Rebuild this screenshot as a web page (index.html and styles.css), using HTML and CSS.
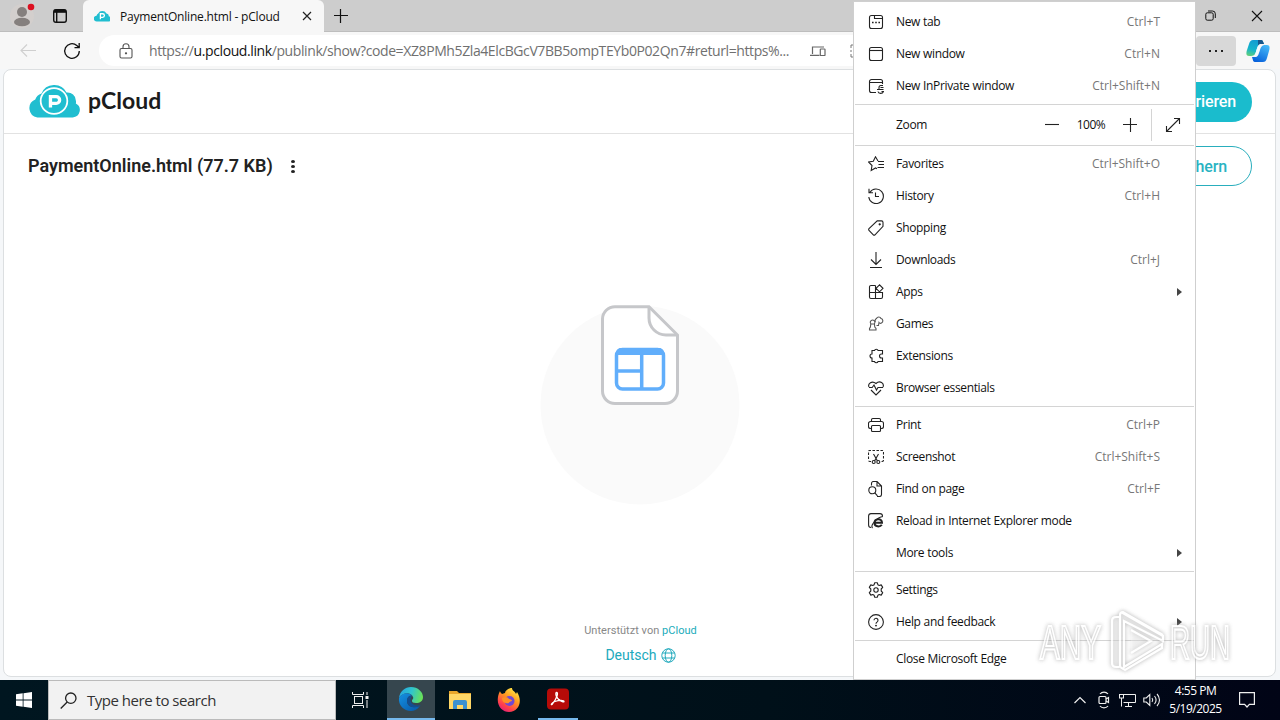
FILE: index.html
```
<!DOCTYPE html>
<html lang="en">
<head>
    <meta charset="UTF-8">
    <meta name="viewport" content="width=device-width, initial-scale=1.0">
    <title>PaymentOnline.html - pCloud</title>
    <link rel="stylesheet" href="styles.css">
</head>
<body>

<div class="desktop">
    <div class="browser">

        <!-- Title bar -->
        <div class="titlebar">
            <div class="profile">
                <svg width="26" height="26" viewBox="0 0 26 26"><circle cx="13" cy="13" r="12" fill="#d3cfcd"/><circle cx="13" cy="9" r="5" fill="#85807e"/><ellipse cx="13" cy="19" rx="8" ry="4.3" fill="#85807e"/><circle cx="22" cy="4" r="3.3" fill="#dc1020"/></svg>
            </div>
            <div class="workspaces">
                <svg width="16" height="16" viewBox="0 0 16 16" fill="none" stroke="#111" stroke-width="1.4"><rect x="1.7" y="1.7" width="12.6" height="12.6" rx="2.2"/><path d="M2 3.3h12" stroke-width="3"/><path d="M4.7 4v10"/></svg>
            </div>
            <div class="tab">
                <svg class="tab-icon" width="16" height="12" viewBox="0 0 50 34"><path d="M9 34a9 9 0 0 1-1-18A9 9 0 0 1 13 9a15 15 0 0 1 26 0 8 8 0 0 1 7 9 8 8 0 0 1-3 16z" fill="#20bed0"/><path d="M20 27V10h7a5 5 0 0 1 0 11h-7" fill="none" stroke="#fff" stroke-width="4"/></svg>
                <span class="tab-title">PaymentOnline.html - pCloud</span>
                <svg class="tab-close" width="10" height="10" viewBox="0 0 10 10" stroke="#222" stroke-width="1.2"><path d="M1 1l8 8M9 1l-8 8"/></svg>
            </div>
            <svg class="new-tab" width="14" height="14" viewBox="0 0 14 14" stroke="#111" stroke-width="1.2"><path d="M0 6.500h14M6.500 0v14"/></svg>
            <div class="window-buttons">
                <svg width="11" height="11" viewBox="0 0 11 11" fill="none" stroke="#111"><rect x=".8" y="2.8" width="7.4" height="7.4" rx="1.5"/><path d="M3 1h4.500a2.800 2.800 0 0 1 2.800 2.800V8"/></svg>
                <svg width="12" height="12" viewBox="0 0 12 12" stroke="#111" stroke-width="1.1"><path d="M1 1l10 10M11 1L1 11"/></svg>
            </div>
        </div>

        <!-- Toolbar -->
        <div class="toolbar">
            <svg class="back" width="16" height="14" viewBox="0 0 16 14" fill="none" stroke="#cfcfcf" stroke-width="1.1"><path d="M16 6.500H1M7 .500l-6 6 6 6"/></svg>
            <svg class="reload" width="18" height="18" viewBox="0 0 18 18" fill="none" stroke="#111" stroke-width="1.3"><path d="M16.300 9A7.300 7.300 0 1 1 13.800 3.500L16 5.500M16.200 1v4.700h-4.700"/></svg>
            <div class="address">
                <svg width="14" height="16" viewBox="0 0 14 16" fill="none" stroke="#555" stroke-width="1.1"><rect x="1" y="5.500" width="12" height="9.500" rx="1.500"/><path d="M4 5.500V3.700a3 3 0 0 1 6 0v1.800"/><circle cx="7" cy="10.300" r=".6" fill="#555"/></svg>
                <span class="url">https://<b>u.pcloud.link</b>/publink/show?code=XZ8PMh5Zla4ElcBGcV7BB5ompTEYb0P02Qn7#returl=https%...</span>
                <svg class="devices" width="16" height="12" viewBox="0 0 16 12" fill="none" stroke="#666" stroke-width="1.200"><path d="M14 2H2.500v7M0 10.300h9.500"/><rect x="10.300" y="4" width="4.700" height="6.500" rx=".6"/></svg>
                <svg class="focus" width="14" height="14" viewBox="0 0 14 14" fill="none" stroke="#777"><path d="M4 1H1v3M1 10v3h3M1 6v2"/></svg>
            </div>
            <div class="more"><i></i><i></i><i></i></div>
            <svg class="copilot" width="24" height="22" viewBox="0 0 24 22">
                <defs>
                    <linearGradient id="cop1" x1="0.500" y1="0" x2="0.200" y2="1"><stop offset="0" stop-color="#129bd2"/><stop offset=".6" stop-color="#16b5cb"/><stop offset="1" stop-color="#62cf7b"/></linearGradient>
                    <linearGradient id="cop2" x1="0.800" y1="0" x2="0.300" y2="1"><stop offset="0" stop-color="#45baf8"/><stop offset="1" stop-color="#0861db"/></linearGradient>
                </defs>
                <path d="M7 0h8c2 0 2 2 3 4h-4c-2 0-3 4-4 8-1 3-3 4-5 4H3c-3 0-3-3-2-6l2-6c1-3 2-4 4-4z" fill="url(#cop1)"/>
                <path d="M12 0h3c2 0 2 2 3 4h-4c-1 0-2 1-2 2z" fill="#17578b"/>
                <path d="M17 22H9c-2 0-2-2-3-5h4c2 0 3-4 4-7 1-4 3-5 5-5h2c3 0 3 3 2 6l-2 7c-1 3-2 4-4 4z" fill="url(#cop2)"/>
                <path d="M14 6c-2 1-2 5-4 9" fill="none" stroke="#f4fbff" stroke-width="2.500"/>
            </svg>
        </div>

        <!-- Web page -->
        <div class="page">
            <header class="page-header">
                <svg class="logo" width="52" height="34" viewBox="0 0 50 34" preserveAspectRatio="none"><path d="M9 33.500a9.500 9.500 0 0 1-2-18 9 9 0 0 1 6-6 13 13 0 0 1 24-1 8 8 0 0 1 9 8 7 7 0 0 1 0 3 7.500 7.500 0 0 1-3 14z" fill="#20bed0"/><circle cx="25" cy="17" r="12.800" fill="none" stroke="#fff" stroke-width="1.700"/><path d="M21.600 23.500V12.700h5.500a3.200 3.200 0 0 1 0 6.600h-5.500" fill="none" stroke="#fff" stroke-width="3.200"/></svg>
                <span class="brand">pCloud</span>
                <div class="btn btn-fill">Registrieren</div>
            </header>
            <div class="file-bar">
                <h1>PaymentOnline.html (77.7 KB)</h1>
                <div class="dots"><i></i><i></i><i></i></div>
                <div class="btn btn-line">Speichern</div>
            </div>
            <div class="preview">
                <svg width="200" height="200" viewBox="0 0 200 200">
                    <circle cx="100" cy="100" r="99.500" fill="#fafafa"/>
                    <path d="M109 1.700H75A12.500 12.500 0 0 0 62.500 14v72A12.500 12.500 0 0 0 75 98.500h50A12.500 12.500 0 0 0 137.500 86V30z" fill="#fff" stroke="#c6c7ca" stroke-width="3"/>
                    <path d="M109 2v11a17 17 0 0 0 17 17h11" fill="none" stroke="#c6c7ca" stroke-width="3"/>
                    <rect x="76.500" y="44.500" width="47" height="39.500" rx="6" fill="#fff" stroke="#61aefb" stroke-width="3.500"/>
                    <path d="M76 50V48a5 5 0 0 1 5-5h38a5 5 0 0 1 5 5v2z" fill="#61aefb"/>
                    <path d="M101.700 49v34M77 66h25" stroke="#61aefb" stroke-width="3.500"/>
                </svg>
            </div>
            <footer class="page-footer">
                <div class="powered">Unterstützt von <a>pCloud</a></div>
                <div class="language">Deutsch
                    <svg width="15" height="15" viewBox="0 0 15 15" fill="none" stroke="#20a9bc"><circle cx="7.500" cy="7.500" r="6.700"/><ellipse cx="7.500" cy="7.500" rx="3.300" ry="6.700"/><path d="M1.500 5h12M1.500 10h12"/></svg>
                </div>
            </footer>
        </div>
    </div>

    <!-- Edge menu -->
    <div class="menu">
        <div class="item">
            <svg viewBox="0 0 16 16"><rect x="1.500" y="1.500" width="13" height="13" rx="2"/><path d="M6.500 1.500v3h8"/><path d="M4 8.500h1.600M7.200 8.500h1.600M10.400 8.500H12" stroke-width="1.600"/></svg>
            <span>New tab</span><kbd>Ctrl+T</kbd>
        </div>
        <div class="item">
            <svg viewBox="0 0 16 16"><rect x="1.500" y="1.500" width="13" height="13" rx="2"/><path d="M1.500 4.500h13"/></svg>
            <span>New window</span><kbd>Ctrl+N</kbd>
        </div>
        <div class="item">
            <svg viewBox="0 0 16 16"><path d="M14.500 6V3.500a2 2 0 0 0-2-2h-9a2 2 0 0 0-2 2v9a2 2 0 0 0 2 2H8M1.500 4.500h13M15 7.500h-2a2 2 0 0 0-2 2v1.500M9 11.500h6.500M10 13.500c.5 2.500 4.500 2.500 5.500 0h-2M12.500 9.500h3"/></svg>
            <span>New InPrivate window</span><kbd>Ctrl+Shift+N</kbd>
        </div>
        <hr>
        <div class="item zoom">
            <span>Zoom</span>
            <svg class="zoom-out" viewBox="0 0 14 14"><path d="M0 6.500h14"/></svg>
            <span class="zoom-value">100%</span>
            <svg class="zoom-in" viewBox="0 0 14 14"><path d="M0 6.500h14M7.500 0v14"/></svg>
            <div class="fullscreen">
                <svg viewBox="0 0 16 16"><path d="M1.500 14.500l13-13M9 1.500h5.500V7M1.500 9v5.500H7"/></svg>
            </div>
        </div>
        <hr>
        <div class="item">
            <svg viewBox="0 0 16 16"><path d="M10 5L7.500.8 5.300 5.200.5 6l3.500 3.500-.8 5L7.500 12l1.500.8M10 5.500h6M10.500 8.500H16M9.500 11.500H16"/></svg>
            <span>Favorites</span><kbd>Ctrl+Shift+O</kbd>
        </div>
        <div class="item">
            <svg viewBox="0 0 16 16"><path d="M.8 9A7.300 7.300 0 1 0 2 4.200M1 .8v4h4M7.500 4.500v4H11"/></svg>
            <span>History</span><kbd>Ctrl+H</kbd>
        </div>
        <div class="item">
            <svg viewBox="0 0 16 16"><path d="M9.200.9h4.300A1.500 1.500 0 0 1 15 2.400v4L7 14.800a1.200 1.200 0 0 1-1.700 0L1 10.300a1.200 1.200 0 0 1 0-1.700z"/><circle cx="11.700" cy="4.300" r=".6" fill="#222"/></svg>
            <span>Shopping</span>
        </div>
        <div class="item">
            <svg viewBox="0 0 16 16"><path d="M8 0v12M3 7.500l5 5 5-5M2 15.500h12"/></svg>
            <span>Downloads</span><kbd>Ctrl+J</kbd>
        </div>
        <div class="item">
            <svg viewBox="0 0 16 16"><path d="M7.500 1.500H3A1.500 1.500 0 0 0 1.500 3v10A1.500 1.500 0 0 0 3 14.500h10a1.500 1.500 0 0 0 1.500-1.500V8.500h-13M7.500 1.500v13M11.500.8L8 4.300l3.500 3.500L15 4.300z"/></svg>
            <span>Apps</span><b class="arrow"></b>
        </div>
        <div class="item">
            <svg class="gray" viewBox="0 0 16 16"><path d="M2.800 7.800a2.300 2.300 0 1 1 3.600 0l.4 3.200 1.200 1.500v1.500H1.500v-1.500L2.400 11zM2.500 8h4M7.500 6a2.400 2.400 0 0 1 1-3.500 2.400 2.400 0 0 1 4.500 0 2.400 2.400 0 0 1 .5 4.500c-1 .6-2 .2-2.500-.5l-.5 3H8.500"/></svg>
            <span>Games</span>
        </div>
        <div class="item">
            <svg viewBox="0 0 16 16"><path d="M4 2.500h2.500a1.900 1.900 0 0 1 3.600 0H14.500V6h-1a2 2 0 0 0 0 4h1v3.500h-4.400a1.900 1.900 0 0 1-3.600 0H4V10a2 2 0 0 1 0-4z"/></svg>
            <span>Extensions</span>
        </div>
        <div class="item">
            <svg viewBox="0 0 16 16"><path d="M1 7C-.5 3.500 4 .200 8 3.500 12-.200 16.500 3.500 15 7M1 7.500h3.200L6 5l2.500 5L10 7.500h5M3 10l5 5 5-5"/></svg>
            <span>Browser essentials</span>
        </div>
        <hr>
        <div class="item">
            <svg viewBox="0 0 16 16"><path d="M3.500 11.500h-1a2 2 0 0 1-2-2V6.500a2 2 0 0 1 2-2h11a2 2 0 0 1 2 2v3a2 2 0 0 1-2 2h-1M3.500 4.500V2.800a1.300 1.300 0 0 1 1.300-1.300h6.400a1.300 1.300 0 0 1 1.300 1.300v1.700"/><rect x="3.500" y="8.500" width="9" height="6" rx="1"/></svg>
            <span>Print</span><kbd>Ctrl+P</kbd>
        </div>
        <div class="item">
            <svg viewBox="0 0 16 16"><path d="M3 12.500H2A1.500 1.500 0 0 1 .5 11V2.500A1 1 0 0 1 1.500 1.500h13a1 1 0 0 1 1 1V11a1.500 1.500 0 0 1-1.500 1.500h-1" stroke-dasharray="2.500 1.500"/><path d="M5.500 5l4 7M10.500 5l-4 7"/><circle cx="5.700" cy="13" r="1.500"/><circle cx="10.300" cy="13" r="1.500"/></svg>
            <span>Screenshot</span><kbd>Ctrl+Shift+S</kbd>
        </div>
        <div class="item">
            <svg viewBox="0 0 16 16"><path d="M3.500 4.500v-2a2 2 0 0 1 2-2H9l4.500 4.500v8.500a2 2 0 0 1-2 2h-2.500M9 .5V5h4.500"/><circle cx="4.300" cy="9.300" r="3.500"/><path d="M6.800 11.800l2.700 3"/></svg>
            <span>Find on page</span><kbd>Ctrl+F</kbd>
        </div>
        <div class="item">
            <svg viewBox="0 0 16 16"><path d="M3 14.500a2.500 2.500 0 0 1-2.400-2.500V3A2.500 2.500 0 0 1 3 .6h9A2.500 2.500 0 0 1 14.500 3"/><path d="M6 9.800h8c0-5-7.500-4.500-7.500.2 0 4 5.500 4.300 7.300 1.700" stroke-width="2"/><path d="M4.500 15C2 12.500 9 4 15 3.500"/></svg>
            <span>Reload in Internet Explorer mode</span>
        </div>
        <div class="item no-icon"><span>More tools</span><b class="arrow"></b></div>
        <hr>
        <div class="item">
            <svg viewBox="0 0 16 16"><path d="M6.600.8h2.800l.5 2 1.300.7 2-.6 1.500 2.500-1.500 1.600v2l1.500 1.600-1.500 2.500-2-.6-1.300.7-.5 2H6.600l-.5-2-1.300-.7-2 .6-1.500-2.500L2.800 9V7L1.300 5.400l1.500-2.500 2 .6 1.300-.7z" stroke-linejoin="round"/><circle cx="8" cy="8" r="2.200"/></svg>
            <span>Settings</span>
        </div>
        <div class="item">
            <svg viewBox="0 0 16 16"><circle cx="8" cy="8" r="7.400"/><path d="M6 6.300a2 2 0 1 1 3.200 1.600C8.300 8.500 8 8.800 8 9.700"/><circle cx="8" cy="11.600" r=".4" fill="#222"/></svg>
            <span>Help and feedback</span><b class="arrow"></b>
        </div>
        <hr>
        <div class="item no-icon"><span>Close Microsoft Edge</span></div>
    </div>

    <!-- Watermark -->
    <svg class="watermark" width="210" height="74" viewBox="0 0 210 74">
        <g class="mark">
            <text x="4" y="53" textLength="61" lengthAdjust="spacingAndGlyphs">ANY</text>
            <text x="134" y="53" textLength="60" lengthAdjust="spacingAndGlyphs">RUN</text>
            <path d="M83 11h-3q-4 0-4 4v42q0 4 4 4h3M85 6l42 24v5L88 15v46l38-23v4L89 64l-5-3V9q0-3 3-3l40 23M95 24l20 11-20 12"/>
        </g>
    </svg>

    <!-- Taskbar -->
    <div class="taskbar">
        <div class="start">
            <svg width="16" height="16" viewBox="0 0 16 16" fill="#fff"><path d="M0 2.200l6.700-.9v6.300H0zM7.500 1.200L16 0v7.600H7.500zM0 8.400h6.700v6.300L0 13.800zM7.500 8.400H16V16l-8.500-1.200z"/></svg>
        </div>
        <div class="search">
            <svg width="17" height="17" viewBox="0 0 17 17" fill="none" stroke="#222" stroke-width="1.300"><circle cx="10.800" cy="6.200" r="5.200"/><path d="M7.200 10L.7 16.500"/></svg>
            <span>Type here to search</span>
        </div>
        <div class="task">
            <svg width="17" height="16" viewBox="0 0 17 16" fill="none" stroke="#eee"><path d="M.5 0v2.500h11V0M.5 16v-2.500h11V16M15 0v3M15 8v8"/><rect x="2.500" y="4.500" width="8" height="7"/><path d="M13.500 5.500h3" stroke-width="3"/></svg>
        </div>
        <div class="task active">
            <svg width="26" height="26" viewBox="0 0 26 26">
                <defs>
                    <linearGradient id="edge1" x1="0" y1="0.300" x2="1" y2="0.500"><stop offset="0" stop-color="#25a4df"/><stop offset=".5" stop-color="#30c4ce"/><stop offset="1" stop-color="#6ae256"/></linearGradient>
                    <linearGradient id="edge2" x1="0" y1="0" x2="1" y2="1"><stop offset="0" stop-color="#1591e2"/><stop offset="1" stop-color="#0756a7"/></linearGradient>
                </defs>
                <path d="M1 12C2 5 7 1 13 1c7 0 12 5 12 10 0 4-3 6-7 6-3 0-4-1-4-2 0-2 2-2 1-4-2-5-10-5-14 1z" fill="url(#edge1)"/>
                <path d="M1 12c3-6 11-6 13-2-3-1-5 2-5 5 0 5 5 8 13 5-3 4-6 5-9 5C6 25 0 19 1 12z" fill="url(#edge2)"/>
                <path d="M9 15c0-3 2-6 5-5-4 5 0 11 9 9-7 5-14 1-14-4z" fill="#134e91"/>
            </svg>
        </div>
        <div class="task">
            <svg width="22" height="20" viewBox="0 0 22 20"><path d="M0 1h8l2 2h12v16H0z" fill="#e9a72b"/><path d="M0 4h22v15H0z" fill="#ffd766"/><path d="M4 19v-7a2 2 0 0 1 2-2h10a2 2 0 0 1 2 2v7h-4v-4H8v4z" fill="#3c91d0"/></svg>
        </div>
        <div class="task">
            <svg width="24" height="24" viewBox="0 0 24 24">
                <defs>
                    <linearGradient id="fox" x1="0.800" y1="0" x2="0.200" y2="1"><stop offset="0" stop-color="#fff04a"/><stop offset=".4" stop-color="#ff9a20"/><stop offset=".75" stop-color="#ff404b"/><stop offset="1" stop-color="#df1a80"/></linearGradient>
                </defs>
                <path d="M3 3c0 1 1 2 2 3l3-1c0-2 4-5 7-5 0 3 3 3 4 6l1-2c6 9 2 20-8 20C4 24-3 15 3 3z" fill="url(#fox)"/>
                <circle cx="12.500" cy="13" r="5" fill="#7048d4"/><path d="M5 10c3-2 6-1 7 1 2 0 3 1 3 2-2 0-3 3-6 2-3 0-4-3-4-5z" fill="#ff9025"/>
            </svg>
        </div>
        <div class="task open">
            <svg width="22" height="22" viewBox="0 0 22 22"><rect width="22" height="21" y=".5" rx="4" fill="#b60b08"/><path d="M9.500 4.500c2 0 1 5-4.500 12-1.500 1-.5-2 3-3 4-1.500 9-1.500 9 0 0 1.500-7-1.500-8-6.500-.3-1.500 0-2.500.5-2.500z" fill="none" stroke="#fff" stroke-width="1.300"/></svg>
        </div>
        <div class="tray">
            <svg width="12" height="8" viewBox="0 0 12 8" fill="none" stroke="#eee" stroke-width="1.200"><path d="M.5 7L6 1.500 11.500 7"/></svg>
            <svg class="meet" width="14" height="18" viewBox="0 0 12 18" fill="none" stroke="#eee" stroke-width="1.200"><rect x="1" y="5.500" width="7" height="7" rx="1"/><path d="M8 8l2.500-1.500v5L8 10M2 3c2-2.500 6-2.500 8 0M2 15c2 2.500 6 2.500 8 0"/></svg>
            <svg width="17" height="14" viewBox="0 0 17 14" fill="none" stroke="#eee"><path d="M4.500 1.500h12v8h-12M6 13.500h7M9.500 9.500v4M2.500 5v8.500"/><rect x=".5" y="1.500" width="4" height="3.500"/></svg>
            <svg class="volume" width="18" height="14" viewBox="0 0 18 14" fill="none" stroke="#eee" stroke-width="1.100"><path d="M.8 5v4h2.500l3.500 3.500v-11L3.300 5zM9 5c1 1.300 1 2.700 0 4M11.500 3c2 2.500 2 5.500 0 8M14 1c3.300 3.500 3.300 8.500 0 12"/></svg>
            <div class="clock"><div>4:55 PM</div><div>5/19/2025</div></div>
            <svg width="16" height="16" viewBox="0 0 16 16" fill="none" stroke="#eee" stroke-width="1.200"><path d="M.6.6h14.800v11.800h-5L8 15l-2.400-2.600h-5z"/></svg>
        </div>
    </div>
</div>

</body>
</html>
```

FILE: styles.css
```
* {
    box-sizing: border-box;
}

body {
    margin: 0;
    width: 1280px;
    height: 720px;
    overflow: hidden;
    font-family: "Open Sans", "Noto Sans", sans-serif;
    color: #111;
}

svg {
    display: block;
    flex-shrink: 0;
}

.desktop {
    position: relative;
    height: 720px;
    display: flex;
    flex-direction: column;
}

.browser {
    height: 680px;
    padding-bottom: 3px;
    display: flex;
    flex-direction: column;
    background: #f5f7f9;
}

/* Title bar */
.titlebar {
    height: 32px;
    display: flex;
    align-items: center;
    background: #cdcdcd;
    border-bottom: 1px solid #bdbdbd;
}

.profile {
    width: 50px;
    padding-left: 9px;
}

.workspaces {
    width: 33px;
    padding-left: 2px;
}

.tab {
    width: 241px;
    height: 32px;
    margin-bottom: -1px;
    padding: 0 12px 0 11px;
    display: flex;
    align-items: center;
    background: #f7f7f7;
    border-radius: 6px 6px 0 0;
}

.tab-title {
    margin-left: 10px;
    font-size: 12px;
    letter-spacing: -0.2px;
    white-space: nowrap;
}

.tab-close {
    margin-left: auto;
}

.new-tab {
    margin-left: 10px;
}

.window-buttons {
    margin-left: auto;
    padding-right: 17px;
    display: flex;
    align-items: center;
    gap: 35px;
}

/* Toolbar */
.toolbar {
    height: 37px;
    display: flex;
    align-items: center;
    background: #f7f7f7;
}

.back {
    margin-left: 20px;
}

.reload {
    margin-left: 27px;
}

.address {
    width: 1050px;
    height: 31px;
    margin-left: 18px;
    padding-left: 20px;
    display: flex;
    align-items: center;
    background: #fff;
    border-radius: 16px;
}

.url {
    width: 643px;
    margin-left: 16px;
    font-size: 14px;
    letter-spacing: -0.4px;
    color: #707070;
    white-space: nowrap;
}

.url b {
    font-weight: normal;
    color: #111;
}

.devices {
    margin-left: 18px;
}

.focus {
    margin-left: 24px;
}

.more {
    width: 40px;
    height: 30px;
    margin-left: 47px;
    display: flex;
    align-items: center;
    justify-content: center;
    gap: 4px;
    background: #d8d8d8;
    border-radius: 4px;
}

.more i {
    width: 2px;
    height: 2px;
    background: #222;
}

.copilot {
    margin-left: 10px;
}

/* Web page */
.page {
    width: 1273px;
    height: 608px;
    margin: 0 0 0 3px;
    display: flex;
    flex-direction: column;
    background: #fff;
    border: 1px solid #dcdfe1;
    border-radius: 8px;
    font-family: Roboto, sans-serif;
}

.page-header {
    height: 64px;
    padding: 0 23px 0 24px;
    display: flex;
    align-items: center;
    border-bottom: 1px solid #e2e2e2;
}

.logo {
    margin-top: -2px;
}

.brand {
    margin: -4px 0 0 8px;
    font-family: Lato, sans-serif;
    font-size: 23px;
    font-weight: bold;
    color: #1b1b1b;
}

.btn {
    height: 40px;
    margin-left: auto;
    display: flex;
    align-items: center;
    justify-content: flex-end;
    border-radius: 20px;
    font-size: 16px;
    font-weight: 500;
}

.btn-fill {
    width: 123px;
    padding-right: 16px;
    background: #1abccd;
    color: #fff;
    letter-spacing: -0.15px;
}

.btn-line {
    width: 150px;
    padding-right: 24px;
    border: 1px solid #29aebd;
    color: #29b3c2;
    letter-spacing: -0.15px;
}

.file-bar {
    height: 64px;
    padding: 0 23px 0 24px;
    display: flex;
    align-items: center;
}

.file-bar h1 {
    margin: -2px 0 0;
    font-size: 18px;
    font-weight: 600;
    color: #222;
}

.dots {
    margin-left: 18px;
    display: flex;
    flex-direction: column;
    gap: 2px;
}

.dots i {
    width: 4px;
    height: 3px;
    background: #222;
    border-radius: 50%;
}

.preview {
    margin-top: 107px;
    display: flex;
    justify-content: center;
}

.page-footer {
    margin-top: 119px;
    text-align: center;
}

.powered {
    font-size: 11px;
    line-height: 13px;
    letter-spacing: 0.03px;
    padding-left: 2px;
    color: #888;
}

.powered a {
    color: #20acbb;
}

.language {
    margin-top: 10px;
    padding-left: 2px;
    display: flex;
    align-items: center;
    justify-content: center;
    gap: 4px;
    font-size: 14px;
    line-height: 16px;
    color: #20a9bc;
}

/* Edge menu */
.menu {
    position: absolute;
    left: 853px;
    top: 1px;
    width: 343px;
    height: 679px;
    padding-top: 4px;
    background: #fff;
    border: 1px solid #cfcfcf;
    font-size: 12px;
}

.menu hr {
    height: 1px;
    margin: 2px 1px;
    border: none;
    background: #d4d4d4;
}

.item {
    height: 32px;
    padding: 0 13px 0 14px;
    display: flex;
    align-items: center;
    white-space: nowrap;
}

.item svg {
    width: 16px;
    height: 16px;
    margin-right: 12px;
    fill: none;
    stroke: #222;
    stroke-width: 1.1;
}

.item svg.gray {
    stroke: #555;
}

.item span,
.item kbd {
    margin-top: -1px;
}

.item span {
    letter-spacing: -0.35px;
    word-spacing: 0.3px;
}

.item kbd {
    margin-left: auto;
    padding-right: 22px;
    font-family: inherit;
    color: #777;
}

.no-icon {
    padding-left: 42px;
}

.arrow {
    margin-left: auto;
    border: 4px solid transparent;
    border-left: 5px solid #444;
    border-right: none;
}

.zoom {
    height: 36px;
    padding: 0 2px 0 42px;
}

.item .zoom-out,
.item .zoom-in {
    width: 14px;
    height: 14px;
    margin: 0;
}

.item .zoom-out {
    margin-left: auto;
}

.item .zoom-value {
    width: 64px;
    text-align: center;
    letter-spacing: -0.5px;
}

.fullscreen {
    height: 32px;
    margin-left: 14px;
    padding-left: 13px;
    display: flex;
    align-items: center;
    border-left: 1px solid #d4d4d4;
}

/* Watermark */
.watermark {
    position: absolute;
    left: 1036px;
    top: 606px;
    opacity: 0.8;
    filter: drop-shadow(0 0 2px #999);
}

.mark {
    fill: rgba(255, 255, 255, 0.3);
    stroke: #fff;
    stroke-width: 2.2;
    font-family: "Liberation Sans Narrow", "Liberation Sans", sans-serif;
    font-size: 48px;
}

/* Taskbar */
.taskbar {
    height: 40px;
    display: flex;
    background: linear-gradient(to right, #001620, #001019 60%, #010416);
    color: #fff;
}

.start {
    width: 48px;
    display: flex;
    align-items: center;
    justify-content: center;
}

.search {
    width: 288px;
    padding-left: 11px;
    display: flex;
    align-items: center;
    gap: 10px;
    background: #f2f2f2;
    border: 1px solid #bbb;
    font-size: 15px;
    letter-spacing: -0.48px;
    color: #333;
}

.task {
    width: 49px;
    display: flex;
    align-items: center;
    justify-content: center;
}

.task.active {
    width: 48px;
    margin-left: 2px;
    background: #36464e;
    border-bottom: 2px solid #76b9ed;
}

.task.open {
    width: 40px;
    margin-left: 5px;
    border-bottom: 2px solid #76b9ed;
}

.tray {
    margin-left: auto;
    padding-right: 25px;
    display: flex;
    align-items: center;
    gap: 8px;
}

.meet {
    margin-left: 3px;
}

.volume {
    margin-left: -1px;
}

.clock {
    width: 53px;
    margin-right: 9px;
    font-size: 12px;
    line-height: 18px;
    letter-spacing: -0.5px;
    text-align: center;
    white-space: nowrap;
}
```
